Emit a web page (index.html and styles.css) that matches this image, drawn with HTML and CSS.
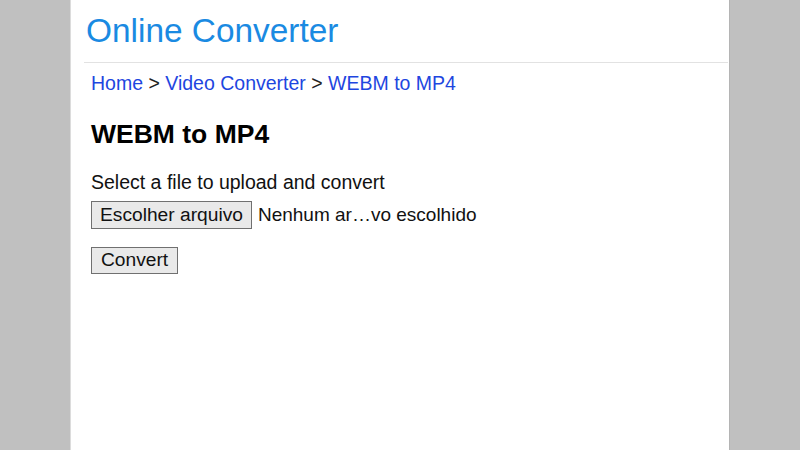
FILE: index.html
```html
<!DOCTYPE html>
<html lang="pt">
<head>
<meta charset="utf-8">
<title>WEBM to MP4 - Online Converter</title>
<link rel="stylesheet" href="styles.css">
</head>
<body>
<div class="page">
  <header class="header">
    <div class="logo">Online Converter</div>
  </header>
  <hr class="rule">
  <main class="content">
    <nav class="crumbs"><a href="#">Home</a> &gt; <a href="#">Video Converter</a> &gt; <a href="#">WEBM to MP4</a></nav>
    <h1 class="title">WEBM to MP4</h1>
    <p class="label">Select a file to upload and convert</p>
    <div class="file-row">
      <button class="btn" type="button">Escolher arquivo</button>
      <span class="file-name">Nenhum ar…vo escolhido</span>
    </div>
    <button class="btn btn-convert" type="button">Convert</button>
  </main>
</div>
</body>
</html>
```

FILE: styles.css
```css
html, body {
  margin: 0;
  padding: 0;
}
body {
  background: #c0c0c0;
  font-family: "Liberation Sans", Arial, sans-serif;
  color: #111;
}
.page {
  width: 658px;
  min-height: 450px;
  margin: 0 auto;
  background: #fff;
  border-left: 1px solid #dcdcdc;
  border-right: 1px solid #b4b4b4;
}
.header {
  padding: 12px 0 0 15px;
}
.logo {
  font-size: 33.4px;
  line-height: 38px;
  color: #1a8ae2;
}
.rule {
  border: 0;
  border-top: 1px solid #e2e2e2;
  margin: 12px 1px 0 13px;
  height: 0;
}
.content {
  padding: 9px 0 0 20px;
  font-size: 19.5px;
}
.crumbs {
  line-height: 22px;
  color: #222;
}
.crumbs a {
  color: #1e46e0;
  text-decoration: none;
}
.title {
  margin: 25px 0 0;
  font-size: 26.5px;
  line-height: 30px;
  font-weight: bold;
  color: #000;
}
.label {
  margin: 22px 0 0;
  line-height: 22px;
}
.file-row {
  display: flex;
  align-items: center;
  gap: 6px;
  margin-top: 8px;
}
.btn {
  font-family: "Liberation Sans", Arial, sans-serif;
  font-size: 19.2px;
  line-height: 22px;
  padding: 2px 8px;
  margin: 0;
  background: #e9e9e9;
  border: 1px solid #707070;
  border-radius: 0;
  color: #111;
}
.file-name {
  font-size: 19px;
  line-height: 22px;
}
.btn-convert {
  display: block;
  margin-top: 18px;
  padding: 1px 9px 2px;
}
```
